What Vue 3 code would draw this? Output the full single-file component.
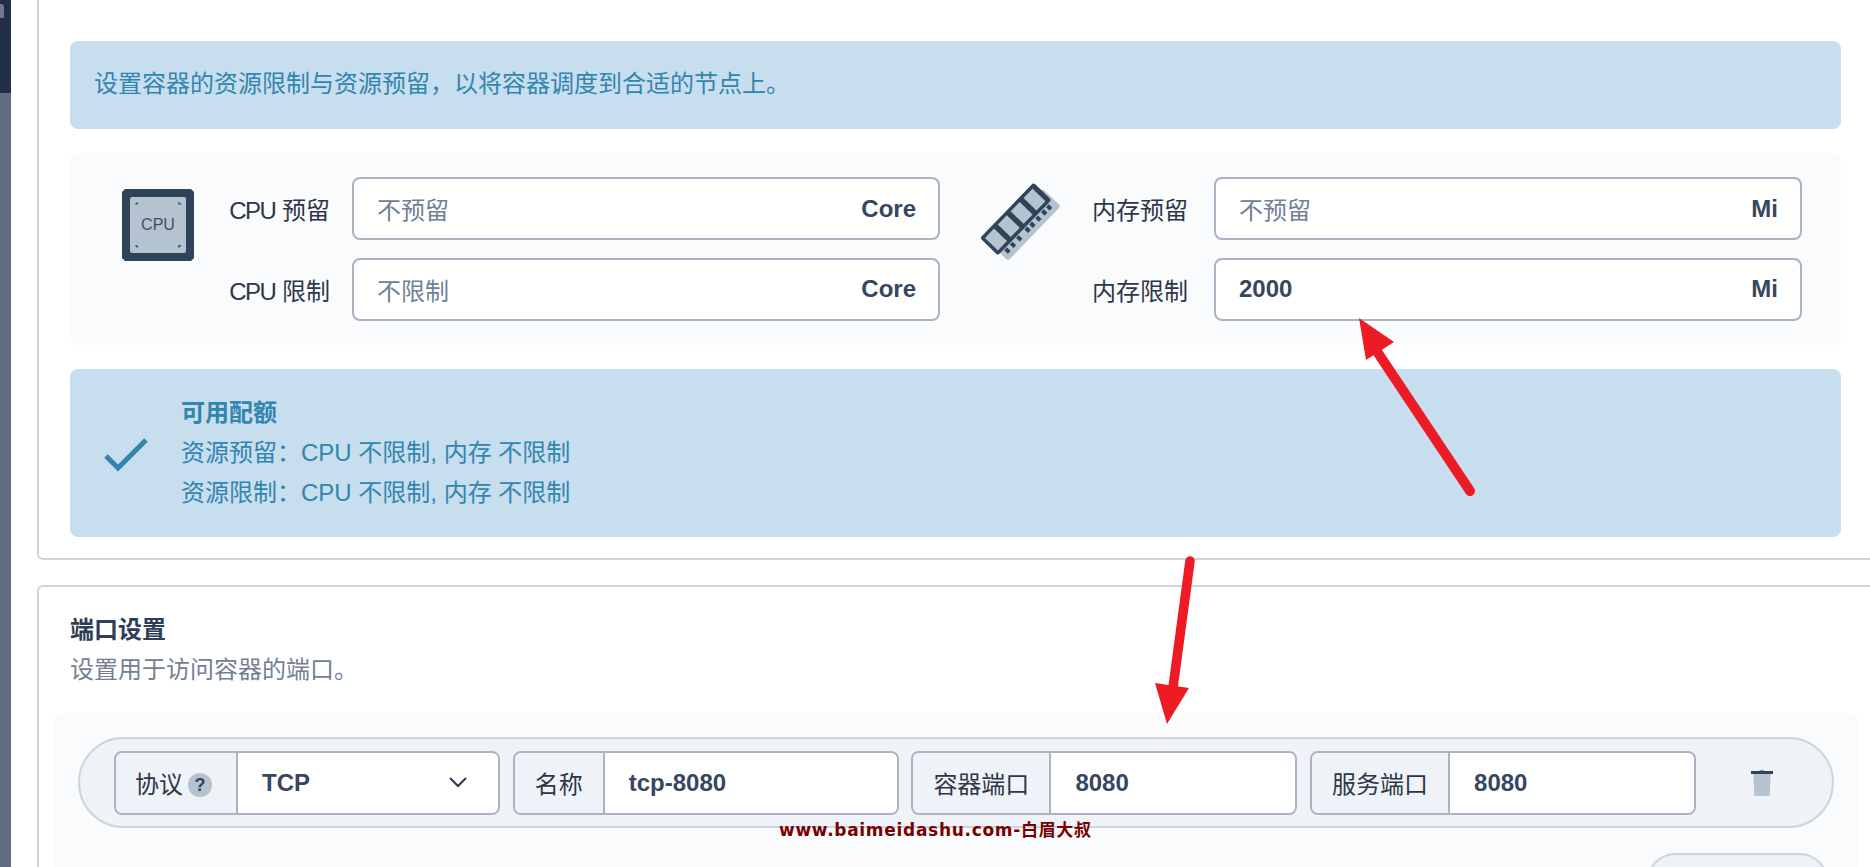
<template>
  <div class="page">
    <aside class="rail"><i class="rail-mark"></i></aside>
    <main class="content">
      <section class="card first">
        <div class="alert intro">设置容器的资源限制与资源预留，以将容器调度到合适的节点上。</div>
        <div class="quota">
          <div class="quota-group">
            <div class="quota-icon">
              <svg width="72" height="72" viewBox="0 0 72 72">
                <path d="M3 0h66l3 3v66l-3 3H3l-3-3V3z" fill="#2f4359" />
                <rect x="8" y="8" width="56" height="56" rx="2" fill="#b5c2cf" />
                <path d="M15.7 12.7v2.9h-3zM56.3 12.7v2.9h3.4zM12.7 56.3h3v3zM56.3 56.3h3.4l-3.4 3z" fill="#2f4359" />
                <text x="36" y="41" text-anchor="middle" class="cpu-text">CPU</text>
              </svg>
            </div>
            <div class="quota-fields cpu-fields">
              <template v-for="f in cpuFields" :key="f.label">
                <label class="quota-label"><span class="latin">CPU</span> {{ f.label }}</label>
                <div class="unit-input">
                  <span :class="f.filled ? 'value' : 'placeholder'">{{ f.text }}</span>
                  <b>{{ f.unit }}</b>
                </div>
              </template>
            </div>
          </div>
          <div class="quota-group">
            <div class="quota-icon">
              <svg class="ram" width="96" height="72" viewBox="0 19 96 72">
                <g transform="translate(10 68) rotate(-46)">
                  <rect x="3" y="11" width="76" height="25" rx="3" fill="#b5c2cf" />
                  <rect v-for="x in ramPins" :key="x" :x="x" y="26" width="4" height="5" fill="#2f4359" />
                  <rect width="77" height="25" rx="2.500" fill="#2f4359" />
                  <rect v-for="x in ramPanes" :key="x" :x="x" y="3.500" width="13" height="18" fill="#b5c2cf" />
                </g>
              </svg>
            </div>
            <div class="quota-fields mem-fields">
              <template v-for="f in memFields" :key="f.label">
                <label class="quota-label">{{ f.label }}</label>
                <div class="unit-input">
                  <span :class="f.filled ? 'value' : 'placeholder'">{{ f.text }}</span>
                  <b>{{ f.unit }}</b>
                </div>
              </template>
            </div>
          </div>
        </div>
        <div class="alert usable">
          <svg class="check" width="44" height="34" viewBox="0 0 44 34">
            <path d="M2 18 14 30 42 2" fill="none" stroke="#3285ae" stroke-width="5" />
          </svg>
          <div class="usable-text">
            <strong>可用配额</strong>
            <p>资源预留：CPU 不限制, 内存 不限制</p>
            <p>资源限制：CPU 不限制, 内存 不限制</p>
          </div>
        </div>
      </section>

      <section class="card second">
        <h3>端口设置</h3>
        <p class="sub">设置用于访问容器的端口。</p>
        <div class="ports">
          <div class="port-row">
            <div class="group">
              <span class="addon proto">协议<i class="help">?</i></span>
              <span class="field select">
                TCP
                <svg width="18" height="11" viewBox="0 0 18 11"><path d="M1 1l8 8 8-8" fill="none" stroke="#2d3748" stroke-width="2" /></svg>
              </span>
            </div>
            <div class="group">
              <span class="addon name">名称</span>
              <span class="field">tcp-8080</span>
            </div>
            <div class="group">
              <span class="addon wide">容器端口</span>
              <span class="field">8080</span>
            </div>
            <div class="group">
              <span class="addon wide">服务端口</span>
              <span class="field">8080</span>
            </div>
            <svg class="trash" width="22" height="28" viewBox="0 0 22 28">
              <path d="M8 2q3-2.500 6 0z" fill="#8e9bac" />
              <path d="M2.300 5h17.400l-1 20.500a1.500 1.500 0 0 1-1.500 1.500H4.800a1.500 1.500 0 0 1-1.500-1.500z" fill="#b5c2cf" />
              <rect y="2" width="22" height="3" fill="#2f4359" />
            </svg>
          </div>
          <div class="add-line"><span class="add-btn"></span></div>
        </div>
      </section>
    </main>

    <svg class="marks" width="1870" height="867" viewBox="0 0 1870 867">
      <path d="M1470 491 1376 350" stroke="#ed1c24" stroke-width="10" stroke-linecap="round" />
      <path d="M1359 318 1394 342 1366 360z" fill="#ed1c24" />
      <path d="M1190 561 1172 695" stroke="#ed1c24" stroke-width="9.500" stroke-linecap="round" />
      <path d="M1167 724 1155 683 1189 688z" fill="#ed1c24" />
    </svg>
    <div class="watermark">www.baimeidashu.com-白眉大叔</div>
  </div>
</template>

<script setup>
const cpuFields = [
  { label: "预留", text: "不预留", unit: "Core" },
  { label: "限制", text: "不限制", unit: "Core" },
];
const memFields = [
  { label: "内存预留", text: "不预留", unit: "Mi" },
  { label: "内存限制", text: "2000", unit: "Mi", filled: true },
];
const ramPanes = [3.5, 22, 40.5, 59];
const ramPins = [8, 16, 25, 37, 44, 52.5, 61, 68];
</script>

<style>
html,
body {
  margin: 0;
  background: #fff;
  overflow: hidden;
}
</style>

<style scoped>
.page {
  position: relative;
  display: flex;
  width: 1870px;
  height: 867px;
  overflow: hidden;
  background: #fff;
  color: #2d3748;
  font-family: "Liberation Sans", "Noto Sans CJK SC", sans-serif;
  font-size: 24px;
}
.rail {
  position: relative;
  flex: none;
  width: 11px;
  background: #636c7e;
}
.rail::before {
  content: "";
  display: block;
  height: 93px;
  background: #212f48;
}
.rail-mark {
  position: absolute;
  top: 4px;
  left: 0;
  width: 4px;
  height: 14px;
  border-radius: 0 3px 0 0;
  background: #717888;
}
.content {
  flex: 1;
  padding-left: 26px;
}
.card {
  box-sizing: border-box;
  width: 1900px;
  border: 2px solid #cbd5e0;
  border-radius: 6px;
  background: #fff;
}
.first {
  height: 581px;
  margin-top: -21px;
  padding: 60px 0 0 31px;
}
.second {
  height: 400px;
  margin-top: 25px;
  padding: 23px 0 0 31px;
}
.alert {
  box-sizing: border-box;
  width: 1771px;
  border-radius: 8px;
  background: #c7deee;
  color: #3285ae;
}
.intro {
  height: 88px;
  padding: 0 24px;
  line-height: 86px;
}
.quota {
  box-sizing: border-box;
  display: flex;
  justify-content: space-between;
  width: 1771px;
  height: 192px;
  margin-top: 24px;
  padding: 24px 39px 24px 40px;
  border-radius: 8px;
  background: #f9fbfd;
}
.quota-group {
  display: flex;
}
.quota-icon {
  flex: none;
  width: 96px;
  height: 72px;
  margin-top: 12px;
  display: flex;
  justify-content: center;
}
.ram {
  overflow: visible;
}
.quota-fields {
  display: grid;
  row-gap: 17px;
  align-items: center;
}
.cpu-fields {
  grid-template-columns: 124px 588px;
  column-gap: 22px;
}
.mem-fields {
  grid-template-columns: 122px 588px;
  column-gap: 26px;
}
.quota-label {
  text-align: right;
  white-space: nowrap;
}
.latin {
  letter-spacing: -1.5px;
}
.unit-input {
  box-sizing: border-box;
  display: flex;
  align-items: center;
  justify-content: space-between;
  height: 63px;
  padding: 0 22px 0 23px;
  border: 2px solid #a9b3c1;
  border-radius: 8px;
  background: #fff;
}
.placeholder {
  color: #718096;
}
.value,
.unit-input b {
  font-weight: 700;
  color: #364660;
}
.cpu-text {
  font: 16px "Liberation Sans", sans-serif;
  fill: #3d4f66;
}
.usable {
  display: flex;
  align-items: center;
  height: 168px;
  margin-top: 24px;
  padding-left: 34px;
}
.check {
  flex: none;
  margin-top: 4px;
}
.usable-text {
  margin-left: 33px;
  line-height: 40px;
}
.usable-text p {
  margin: 0;
}
h3 {
  margin: 0;
  color: #2f3d57;
  font-size: 24px;
  line-height: 40px;
}
.sub {
  margin: 0;
  color: #718096;
  line-height: 40px;
}
.ports {
  box-sizing: border-box;
  width: 1804px;
  height: 200px;
  margin: 23px 0 0 -16px;
  padding-top: 24px;
  border-radius: 8px;
  background: #f9fbfd;
}
.port-row {
  box-sizing: border-box;
  display: flex;
  align-items: center;
  gap: 12.7px;
  width: 1756px;
  height: 91px;
  margin-left: 24px;
  padding-left: 34px;
  border: 2px solid #cbd5e0;
  border-radius: 46px;
  background: #eff3f8;
}
.group {
  box-sizing: border-box;
  display: flex;
  width: 386px;
  height: 64px;
  border: 2px solid #a9b3c1;
  border-radius: 8px;
  overflow: hidden;
}
.addon {
  flex: none;
  box-sizing: border-box;
  display: flex;
  align-items: center;
  justify-content: center;
  border-right: 2px solid #a9b3c1;
  background: #eff3f8;
}
.proto {
  width: 122px;
  justify-content: flex-start;
  padding-left: 19px;
}
.name {
  width: 90px;
}
.wide {
  width: 138px;
}
.help {
  width: 24px;
  height: 24px;
  margin: 4px 0 0 5px;
  border-radius: 50%;
  background: #b5c2cf;
  color: #2f4359;
  font-size: 18px;
  font-style: normal;
  font-weight: 700;
  line-height: 24px;
  text-align: center;
}
.field {
  flex: 1;
  display: flex;
  align-items: center;
  justify-content: space-between;
  padding: 0 24px;
  background: #fff;
  color: #364660;
  font-weight: 700;
}
.select svg {
  margin-right: 7px;
}
.trash {
  flex: none;
  margin-left: 42px;
}
.add-line {
  display: flex;
  justify-content: flex-end;
  margin-top: 25px;
  padding-right: 29px;
}
.add-btn {
  box-sizing: border-box;
  width: 183px;
  height: 60px;
  border: 2px solid #cbd5e0;
  border-radius: 30px;
  background: #eff3f8;
}
.marks {
  position: absolute;
  top: 0;
  left: 0;
  pointer-events: none;
}
.watermark {
  position: absolute;
  top: 820px;
  left: 779px;
  color: #7a0000;
  font-family: "DejaVu Sans", "Noto Sans CJK SC", sans-serif;
  font-size: 17px;
  font-weight: 700;
  line-height: 20px;
  letter-spacing: 0.7px;
  white-space: nowrap;
}
</style>
